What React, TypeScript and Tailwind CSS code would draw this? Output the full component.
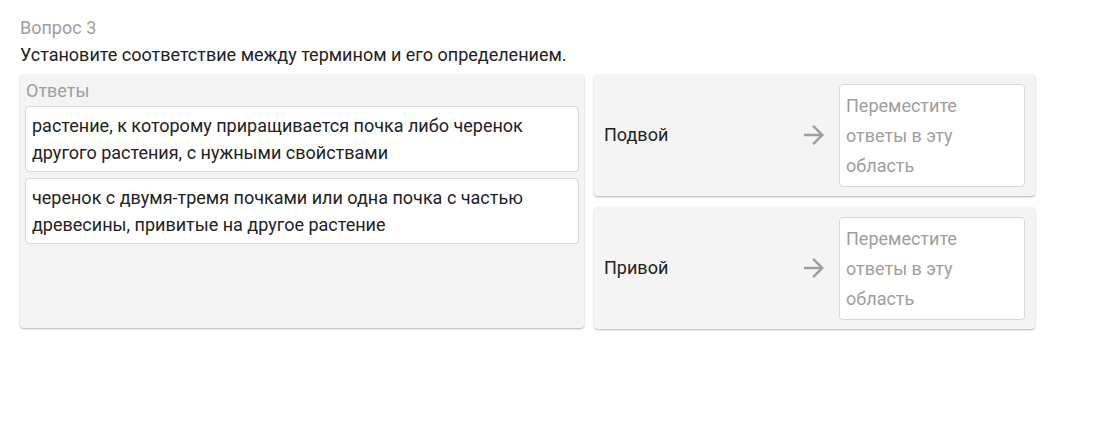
import React from "react";

const answers = [
  "растение, к которому приращивается почка либо черенок другого растения, с нужными свойствами",
  "черенок с двумя-тремя почками или одна почка с частью древесины, привитые на другое растение",
];

const terms = ["Подвой", "Привой"];

const ArrowIcon = () => (
  <svg width="30" height="30" viewBox="0 0 24 24" className="text-[#9e9e9e]">
    <path fill="currentColor" d="M12 4l-1.41 1.41L16.17 11H4v2h12.17l-5.58 5.59L12 20l8-8z" />
  </svg>
);

const TermRow = ({ term }: { term: string }) => (
  <div className="flex items-center h-[122px] bg-[#f4f4f4] rounded shadow-[0_1px_2px_rgba(0,0,0,0.3)] pl-[10px] pr-[10px]">
    <div className="flex-1 text-[18px] text-[#222] -mt-[1px]">{term}</div>
    <div className="w-[30px] mr-[10px] flex items-center justify-center">
      <ArrowIcon />
    </div>
    <div className="w-[186px] h-[103px] bg-white border border-[#d6d6d6] rounded pt-[6px] pl-[6px] pr-[24px] text-[18px] leading-[30px] text-[#9e9e9e]">
      Переместите ответы в эту область
    </div>
  </div>
);

export default function App() {
  return (
    <div className="min-h-screen bg-white px-5 pt-[16px] font-['Roboto',sans-serif]">
      <div className="text-[18px] leading-[24px] text-[#9e9e9e]">Вопрос 3</div>
      <div className="text-[18px] leading-[24px] text-[#222] mt-[3px]">
        Установите соответствие между термином и его определением.
      </div>
      <div className="flex gap-[10px] mt-[7px] w-[1015px]">
        <div className="w-[564px] h-[254px] bg-[#f4f4f4] rounded shadow-[0_1px_2px_rgba(0,0,0,0.3)] px-[5px] pt-[6px]">
          <div className="pl-[1px] text-[18px] leading-[22px] text-[#9e9e9e]">Ответы</div>
          <div className="flex flex-col gap-[6px] mt-[4px]">
            {answers.map((a) => (
              <div
                key={a}
                className="bg-white border border-[#d6d6d6] rounded px-[6px] pt-[5px] pb-[5px] text-[18px] leading-[27px] text-[#222]"
              >
                {a}
              </div>
            ))}
          </div>
        </div>
        <div className="flex-1 flex flex-col gap-[11px]">
          {terms.map((t) => (
            <TermRow key={t} term={t} />
          ))}
        </div>
      </div>
    </div>
  );
}
